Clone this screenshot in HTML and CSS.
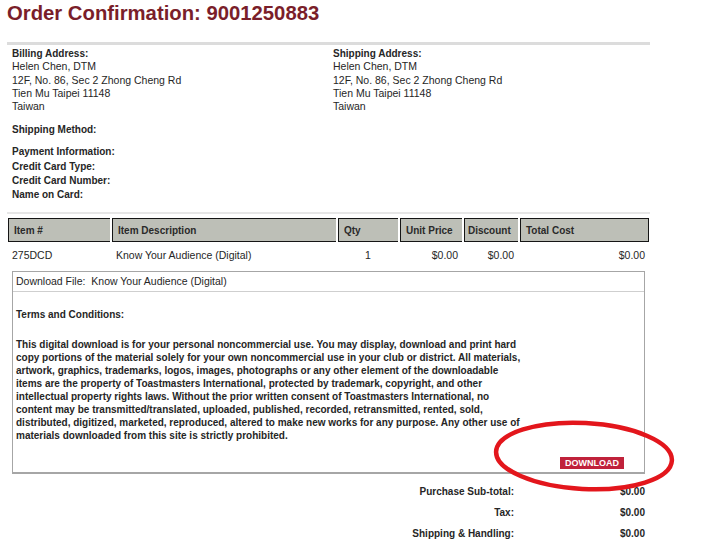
FILE: index.html
```html
<!DOCTYPE html>
<html lang="en">
<head>
<meta charset="utf-8">
<title>Order Confirmation</title>
<link rel="stylesheet" href="styles.css">
</head>
<body>
<div class="page">
  <h1 class="title">Order Confirmation: 9001250883</h1>
  <div class="sep"></div>

  <div class="addresses">
    <div class="addr addr-billing">
      <div class="label">Billing Address:</div>
      <div>Helen Chen, DTM</div>
      <div>12F, No. 86, Sec 2 Zhong Cheng Rd</div>
      <div>Tien Mu Taipei 11148</div>
      <div>Taiwan</div>
    </div>
    <div class="addr addr-shipping">
      <div class="label">Shipping Address:</div>
      <div>Helen Chen, DTM</div>
      <div>12F, No. 86, Sec 2 Zhong Cheng Rd</div>
      <div>Tien Mu Taipei 11148</div>
      <div>Taiwan</div>
    </div>
  </div>

  <div class="method label">Shipping Method:</div>

  <div class="payment">
    <div class="label">Payment Information:</div>
    <div class="label">Credit Card Type:</div>
    <div class="label">Credit Card Number:</div>
    <div class="label">Name on Card:</div>
  </div>

  <div class="table-wrap">
    <table class="items">
      <colgroup>
        <col class="c-item">
        <col class="c-desc">
        <col class="c-qty">
        <col class="c-unit">
        <col class="c-disc">
        <col class="c-total">
      </colgroup>
      <thead>
        <tr>
          <th>Item #</th>
          <th>Item Description</th>
          <th>Qty</th>
          <th>Unit Price</th>
          <th class="th-disc">Discount</th>
          <th>Total Cost</th>
        </tr>
      </thead>
      <tbody>
        <tr>
          <td>275DCD</td>
          <td>Know Your Audience (Digital)</td>
          <td class="center">1</td>
          <td class="right">$0.00</td>
          <td class="right">$0.00</td>
          <td class="right">$0.00</td>
        </tr>
      </tbody>
    </table>
  </div>

  <div class="download-box">
    <div class="dl-file">Download File:&nbsp; Know Your Audience (Digital)</div>
    <div class="terms">
      <div class="terms-title">Terms and Conditions:</div>
      <p class="terms-text">This digital download is for your personal noncommercial use. You may display, download and print hard<br>copy portions of the material solely for your own noncommercial use in your club or district. All materials,<br>artwork, graphics, trademarks, logos, images, photographs or any other element of the downloadable<br>items are the property of Toastmasters International, protected by trademark, copyright, and other<br>intellectual property rights laws. Without the prior written consent of Toastmasters International, no<br>content may be transmitted/translated, uploaded, published, recorded, retransmitted, rented, sold,<br>distributed, digitized, marketed, reproduced, altered to make new works for any purpose. Any other use of<br>materials downloaded from this site is strictly prohibited.</p>
      <div class="dl-row"><a class="dl-btn" href="#">DOWNLOAD</a></div>
    </div>
  </div>

  <div class="totals">
    <div class="t-label">Purchase Sub-total:</div><div class="t-val">$0.00</div>
    <div class="t-label">Tax:</div><div class="t-val">$0.00</div>
    <div class="t-label">Shipping &amp; Handling:</div><div class="t-val">$0.00</div>
  </div>

  <svg class="circle" width="200" height="100" viewBox="0 0 200 100" aria-hidden="true">
    <ellipse cx="97" cy="42" rx="88" ry="33" fill="none" stroke="#e3161c" stroke-width="4.5" transform="rotate(3 97 42)"/>
  </svg>
</div>
</body>
</html>
```

FILE: styles.css
```css
html, body {
  margin: 0;
  padding: 0;
  background: #ffffff;
}

body {
  font-family: "Liberation Sans", Arial, sans-serif;
  color: #262626;
  font-size: 10.5px;
}

.page {
  position: relative;
  width: 643px;
  padding-left: 7px;
}

.title {
  margin: 0;
  padding-top: 1px;
  font-size: 20.3px;
  line-height: 24px;
  font-weight: bold;
  color: #7a1e2a;
}

.sep {
  margin-top: 17px;
  height: 3px;
  background: #dcdcdc;
}

.label {
  font-weight: bold;
  font-size: 10px;
}

.addresses {
  display: flex;
  margin-top: 2px;
  line-height: 13.25px;
}

.addr-billing {
  width: 321px;
  padding-left: 5px;
}

.addr-shipping {
  flex: 1;
}

.method {
  margin-top: 10px;
  padding-left: 5px;
  line-height: 13px;
}

.payment {
  margin-top: 9px;
  padding-left: 5px;
  line-height: 14.3px;
}

.table-wrap {
  margin-top: 10px;
  border-top: 2px solid #e6e6e6;
  padding-top: 3px;
}

.items {
  width: 643px;
  table-layout: fixed;
  border-collapse: separate;
  border-spacing: 0;
  font-size: 10.5px;
}

.c-item { width: 104px; }
.c-desc { width: 226px; }
.c-qty { width: 62px; }
.c-unit { width: 64px; }
.c-disc { width: 56px; }
.c-total { width: 131px; }

.items th {
  height: 22px;
  padding: 0 0 0 5px;
  background: #bdbfb7;
  border: 2px solid #151515;
  border-right-width: 1px;
  text-align: left;
  font-size: 10px;
  font-weight: bold;
  color: #2a2a2a;
  outline: 1px solid #ffffff;
  outline-offset: -1px;
}

.items th + th {
  border-left-width: 2px;
}

.items th:last-child {
  border-right-width: 2px;
}

.items th.th-disc {
  padding-left: 3px;
}

.items td {
  height: 24px;
  padding: 0 5px;
  white-space: nowrap;
}

.items td.center { text-align: center; }
.items td.right { text-align: right; }

.download-box {
  margin-left: 5px;
  width: 631px;
  margin-top: 4px;
  border: 1px solid #a6a6a6;
  border-bottom-width: 2px;
}

.dl-file {
  height: 19px;
  line-height: 19px;
  padding-left: 3px;
  border-bottom: 1px solid #cfcfcf;
}

.terms {
  padding: 0 3px 3px 3px;
}

.terms-title {
  font-weight: bold;
  font-size: 10px;
  line-height: 13px;
  margin-top: 16px;
}

.terms-text {
  margin: 17px 0 0 0;
  font-weight: bold;
  font-size: 10px;
  line-height: 13px;
  white-space: nowrap;
}

.dl-row {
  display: flex;
  justify-content: flex-end;
  padding-right: 17px;
  margin-top: 15px;
}

.dl-btn {
  display: block;
  background: #c0223b;
  color: #ffffff;
  font-size: 9px;
  font-weight: bold;
  line-height: 12px;
  padding: 0 5px;
  text-decoration: none;
}

.totals {
  display: grid;
  grid-template-columns: 507px 131px;
  grid-auto-rows: 21px;
  margin-top: 7px;
  font-size: 10px;
  font-weight: bold;
  align-items: center;
}

.t-label {
  text-align: right;
}

.t-val {
  text-align: right;
}

.circle {
  position: absolute;
  left: 487px;
  top: 414px;
  overflow: visible;
}
```
